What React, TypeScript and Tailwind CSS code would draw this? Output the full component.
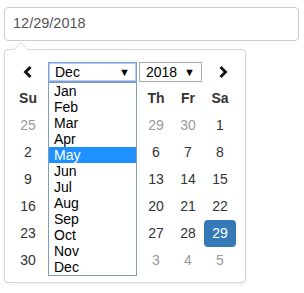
import * as React from 'react';

const MONTHS = ['Jan', 'Feb', 'Mar', 'Apr', 'May', 'Jun', 'Jul', 'Aug', 'Sep', 'Oct', 'Nov', 'Dec'];
const DOW = ['Su', 'Mo', 'Tu', 'We', 'Th', 'Fr', 'Sa'];

type Day = { n: number; muted?: boolean; active?: boolean };

// December 2018 starts on a Saturday
const buildWeeks = (): Day[][] => {
  const days: Day[] = [];
  for (let d = 25; d <= 30; d++) days.push({ n: d, muted: true });
  for (let d = 1; d <= 31; d++) days.push({ n: d, active: d === 29 });
  for (let d = 1; days.length < 42; d++) days.push({ n: d, muted: true });
  const weeks: Day[][] = [];
  for (let i = 0; i < 42; i += 7) weeks.push(days.slice(i, i + 7));
  return weeks;
};

// columns Mo..We sit under the open month list
const isCovered = (col: number) => col >= 1 && col <= 3;

function Chevron({ dir }: { dir: 'left' | 'right' }) {
  return (
    <svg width="10" height="14" viewBox="0 0 10 14" fill="none">
      <polyline
        points={dir === 'left' ? '7.5,2 2.5,7 7.5,12' : '2.5,2 7.5,7 2.5,12'}
        stroke="#111"
        strokeWidth="2.9"
        strokeLinejoin="miter"
      />
    </svg>
  );
}

function FakeSelect({ value, width, focused }: { value: string; width: string; focused?: boolean }) {
  return (
    <div
      className={`${width} h-[20px] flex items-center justify-between pl-[6px] pr-[6px] bg-white text-[14px] text-black border ${
        focused ? 'border-[#7b9fd9] shadow-[inset_0_0_0_1px_#b9cdee]' : 'border-[#a9a9a9]'
      }`}
    >
      <span className="leading-none">{value}</span>
      <span className="text-[11px] leading-none">▼</span>
    </div>
  );
}

export default function App() {
  const weeks = buildWeeks();

  return (
    <div className="w-[304px] h-[293px] bg-white pl-1 pt-[7px] font-['Liberation_Sans',Arial,sans-serif]">
      {/* Input */}
      <div className="w-[295px] h-[34px] border border-[#cccccc] rounded-[4px] flex items-center pl-[8px] text-[14.5px] text-[#555555]">
        12/29/2018
      </div>

      {/* Popup */}
      <div className="relative mt-[8px] w-[242px] h-[234px] border border-[#d5d5d5] rounded-[4px] bg-white pt-[12px] px-[7px] shadow-[0_2px_4px_rgba(0,0,0,0.06)]">
        <div className="absolute -top-[8px] left-[8px] w-0 h-0 border-l-[8px] border-r-[8px] border-b-[8px] border-l-transparent border-r-transparent border-b-[#d5d5d5]" />
        <div className="absolute -top-[7px] left-[9px] w-0 h-0 border-l-[7px] border-r-[7px] border-b-[7px] border-l-transparent border-r-transparent border-b-white" />

        {/* Nav */}
        <div className="relative h-[20px] flex items-center">
          <div className="w-[32px] flex justify-center">
            <Chevron dir="left" />
          </div>
          <div className="ml-[4px] relative">
            <FakeSelect value="Dec" width="w-[89px]" focused />
            <div className="absolute left-0 top-[20px] w-[89px] border border-[#7f9db9] bg-white z-10 text-[14px] text-black">
              {MONTHS.map((m) => (
                <div
                  key={m}
                  className={`h-[16px] leading-[16px] pl-[5px] ${m === 'May' ? 'bg-[#1e90ff] text-white' : ''}`}
                >
                  {m}
                </div>
              ))}
            </div>
          </div>
          <div className="ml-[2px]">
            <FakeSelect value="2018" width="w-[63px]" />
          </div>
          <div className="flex-1 flex justify-center pl-[6px]">
            <Chevron dir="right" />
          </div>
        </div>

        {/* Grid */}
        <div className="mt-[3px] grid grid-cols-[repeat(7,32px)] text-[14px] text-[#333333]">
          {DOW.map((d, c) => (
            <div
              key={d}
              className={`h-[27px] flex items-center justify-center font-bold ${isCovered(c) ? 'invisible' : ''}`}
            >
              {d}
            </div>
          ))}
          {weeks.flat().map((day, i) => (
            <div
              key={i}
              className={`h-[27px] flex items-center justify-center ${isCovered(i % 7) ? 'invisible' : ''} ${
                day.active ? 'bg-[#337ab7] text-white rounded-[4px]' : day.muted ? 'text-[#999999]' : ''
              }`}
            >
              {day.n}
            </div>
          ))}
        </div>
      </div>
    </div>
  );
}
